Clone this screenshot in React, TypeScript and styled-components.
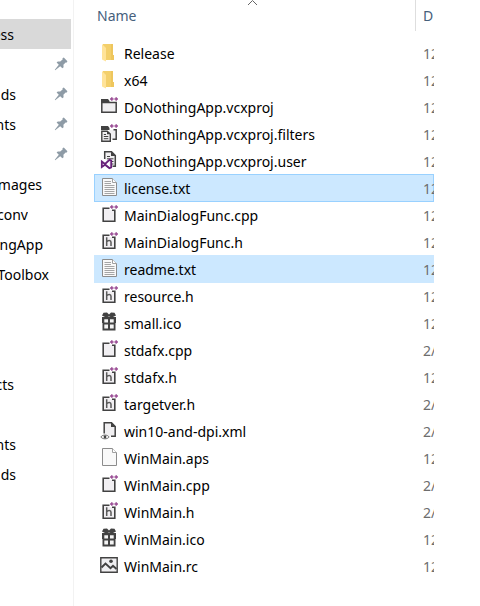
import React from "react";
import styled, { createGlobalStyle } from "styled-components";

const GlobalStyle = createGlobalStyle`
  * { box-sizing: border-box; }
  body {
    margin: 0;
    background: #fff;
    color: #000;
    font-family: "Segoe UI", "Noto Sans", sans-serif;
    font-size: 14px;
    line-height: 26px;
  }
`;

const Explorer = styled.div`
  display: flex;
  min-height: 100vh;
  overflow: hidden;
`;

const Sidebar = styled.nav`
  flex: none;
  width: 74px;
  padding: 19px 2px 0 0;
  border-right: 1px solid #f2f2f2;
`;

const NavGroup = styled.ul`
  list-style: none;
  margin: 0 0 20px;
  padding: 0;
`;

const NavItem = styled.li<{ $current?: boolean }>`
  height: 30px;
  background: ${(p) => (p.$current ? "#d9d9d9" : "transparent")};
`;

const NavLink = styled.a`
  display: flex;
  align-items: center;
  justify-content: space-between;
  height: 30px;
  padding-right: 3px;
  color: inherit;
  text-decoration: none;
`;

const NavLabel = styled.span<{ $extent: number }>`
  display: flex;
  justify-content: flex-end;
  width: ${(p) => p.$extent}px;
  padding-top: 2px;
  overflow: hidden;
  white-space: nowrap;
`;

const Files = styled.main`
  flex: 1;
  min-width: 0;
  padding: 0 46px 0 20px;
`;

const Table = styled.table`
  display: block;
  width: 100%;
`;

const Head = styled.thead`
  display: block;
  height: 39px;
`;

const HeadRow = styled.tr`
  display: flex;
  height: 31px;
  position: relative;
`;

const HeadCell = styled.th<{ $date?: boolean }>`
  flex: ${(p) => (p.$date ? "none" : "1")};
  width: ${(p) => (p.$date ? "19px" : "auto")};
  padding: ${(p) => (p.$date ? "3px 0 0 7px" : "3px 0 0 3px")};
  border-left: ${(p) => (p.$date ? "1px solid #dedede" : "none")};
  overflow: hidden;
  font-weight: 400;
  text-align: left;
`;

const SortButton = styled.button`
  border: 0;
  padding: 0;
  background: none;
  color: #46607c;
  font: inherit;
`;

const SortMark = styled.svg`
  position: absolute;
  left: 153px;
  top: 0;
`;

const Body = styled.tbody`
  display: block;
`;

const FileRow = styled.tr<{ $selected?: boolean; $focused?: boolean }>`
  display: flex;
  height: 28px;
  margin-bottom: -1px;
  background: ${(p) => (p.$selected ? "#cce8ff" : "transparent")};
  box-shadow: ${(p) => (p.$focused ? "inset 0 0 0 1px #99d1ff" : "none")};
`;

const NameCell = styled.td`
  display: flex;
  flex: 1;
  gap: 5px;
  min-width: 0;
  padding: 3px 0 0 5px;
  white-space: nowrap;
`;

const FileName = styled.span`
  line-height: 24px;
`;

const DateCell = styled.td`
  flex: none;
  width: 11px;
  padding: 3px 0 0;
  color: #6d6d6d;
  line-height: 24px;
  overflow: hidden;
  white-space: nowrap;
`;

const Glyph = styled.svg`
  flex: none;
  width: 20px;
  height: 20px;
`;

type Kind =
  | "folder" | "project" | "filters" | "user" | "text"
  | "cpp" | "header" | "gift" | "xml" | "blank" | "image";

const DARK = "#424242";
const PURPLE = "#9b4f96";

const PlusPlus = () => (
  <path
    d="M11 3H14.6M12.8 1.2V4.8M15.4 3H19M17.2 1.2V4.8"
    stroke={PURPLE}
    strokeWidth="1.5"
    fill="none"
  />
);

const SourceFrame = () => (
  <>
    <path d="M4.2 4.2H10.5V6H15.8V17.3H4.2Z" fill="#f1eff2" />
    <path d="M10.5 4.2H4.2V17.3H15.8V6.2H13" fill="none" stroke={DARK} strokeWidth="1.6" />
  </>
);

const Paper = () => (
  <>
    <path d="M3.5 1.5H13.5L17.5 5.5V18.5H3.5Z" fill="#f9f9f9" stroke="#8c8c8c" />
    <path d="M13.5 1.5V5.5H17.5" fill="#fff" stroke="#a0a0a0" />
  </>
);

const drawings: Record<Kind, React.ReactNode> = {
  folder: (
    <>
      <path d="M4 2H14V13H15V18H4Z" fill="#f3cf6b" />
      <path d="M12 2H14V13H15V18H12Z" fill="#eec65d" />
      <path d="M3 2L7 6V19.5L3 17.5Z" fill="#ffe399" />
    </>
  ),
  project: (
    <>
      <path d="M2 3H9L10.5 5V7.5H2Z" fill={DARK} />
      <path d="M2.8 6.5H17.2V16.2H2.8Z" fill="#f0eff1" stroke={DARK} strokeWidth="1.5" />
      <PlusPlus />
    </>
  ),
  filters: (
    <>
      <path d="M10 7H17V16H11Z" fill="#f0eff1" />
      <path d="M2 3H9L10.5 5V7H2Z" fill={DARK} />
      <path d="M14.5 6.7H17.2V16.2H13.5" fill="none" stroke={DARK} strokeWidth="1.5" />
      <path d="M2.8 8.2H8.2L11.3 11V18.3H2.8Z" fill="#f0eff1" stroke={DARK} strokeWidth="1.4" />
      <path d="M8 8.2V11.3H11.3Z" fill={DARK} />
      <path d="M4.8 11.5H7M4.8 13.5H9.3M4.8 15.7H9.3" stroke={DARK} />
      <PlusPlus />
    </>
  ),
  user: (
    <>
      <path d="M5.7 9V1.8H12.5L16.3 5.6V16.3H13.5" fill="#f0eff1" stroke={DARK} strokeWidth="1.5" />
      <path d="M12 1.5V6H16.5Z" fill={DARK} />
      <path d="M8 6.5H11M8 8.8H14.5M13 11.5H14.5M13 14H14.5" stroke={DARK} />
      <path
        d="M2.8 11.5L6 14L10.5 9.8L12.2 10.5V17.5L10.5 18.2L6 14.8L2.8 17Z"
        fill="#f3eaf5"
        stroke="#68217a"
        strokeWidth="1.8"
      />
      <path d="M10.3 12V16L7.8 14.2Z" fill="#fff" />
      <path d="M6 14.2L10.3 18" stroke="#68217a" strokeWidth="1.5" />
    </>
  ),
  text: (
    <>
      <Paper />
      <path d="M5.5 4.5H12M5.5 6.5H12M5.5 8.5H15.5M5.5 10.5H15.5M5.5 12.5H15.5M5.5 14.5H15.5M5.5 16.5H15.5" stroke="#a5a5a5" />
    </>
  ),
  cpp: (
    <>
      <SourceFrame />
      <PlusPlus />
    </>
  ),
  header: (
    <>
      <SourceFrame />
      <path d="M7.7 6.3V15M7.7 10.8C9 9 12 9 12 11.2V15" fill="none" stroke="#5a5a5a" strokeWidth="1.5" />
      <PlusPlus />
    </>
  ),
  gift: (
    <>
      <path d="M3 5H17V11H16.5V18.6H3.5V11H3Z" fill={DARK} />
      <path d="M5.3 7.3H9V10.5H5.3ZM11 7.3H14.7V10.5H11ZM5.3 12.5H9V16.6H5.3ZM11 12.5H14.7V16.6H11Z" fill="#f4f4f4" />
      <path d="M4.5 0.8L8 0.5L10 2.4L12 0.5L15.5 0.8L17 3.4L13 5.4L10 4.6L7 5.4L3 3.4Z" fill={DARK} />
    </>
  ),
  xml: (
    <>
      <path d="M5.2 13.5V2.8H12.5L16.2 6.5V16.2H12" fill="#f0eff1" stroke={DARK} strokeWidth="1.5" />
      <path d="M12 2V7H17Z" fill={DARK} />
      <path d="M1.8 17C3.5 14.4 8.5 14.4 10.2 17C8.5 19.4 3.5 19.4 1.8 17Z" fill="#fff" stroke="#666" />
      <circle cx="6" cy="16.9" r="1.4" fill={DARK} />
    </>
  ),
  blank: <Paper />,
  image: (
    <>
      <path d="M1.8 2.8H18.2V17.2H1.8Z" fill="#f0eff1" stroke={DARK} strokeWidth="1.4" />
      <path d="M2.5 12.5L6.5 8.5L11.5 13.2L14 10.8L17.5 14" fill="none" stroke={DARK} strokeWidth="1.9" />
      <circle cx="12" cy="6.2" r="1.8" fill={DARK} />
    </>
  ),
};

interface Place {
  label: string;
  extent: number;
  pinned?: boolean;
  current?: boolean;
}

const quickAccess: Place[] = [
  { label: "ess", extent: 14, current: true },
  { label: "", extent: 0, pinned: true },
  { label: "ds", extent: 16, pinned: true },
  { label: "nts", extent: 16, pinned: true },
  { label: "", extent: 0, pinned: true },
  { label: "mages", extent: 42 },
  { label: "conv", extent: 28 },
  { label: "ngApp", extent: 43 },
  { label: "Toolbox", extent: 49 },
];

const computer: Place[] = [
  { label: "", extent: 0 },
  { label: "", extent: 0 },
  { label: "cts", extent: 14 },
  { label: "", extent: 0 },
  { label: "nts", extent: 16 },
  { label: "ds", extent: 16 },
];

interface Entry {
  name: string;
  kind: Kind;
  date: string;
  selected?: boolean;
  focused?: boolean;
}

const entries: Entry[] = [
  { name: "Release", kind: "folder", date: "12" },
  { name: "x64", kind: "folder", date: "12" },
  { name: "DoNothingApp.vcxproj", kind: "project", date: "12" },
  { name: "DoNothingApp.vcxproj.filters", kind: "filters", date: "12" },
  { name: "DoNothingApp.vcxproj.user", kind: "user", date: "12" },
  { name: "license.txt", kind: "text", date: "12", selected: true, focused: true },
  { name: "MainDialogFunc.cpp", kind: "cpp", date: "12" },
  { name: "MainDialogFunc.h", kind: "header", date: "12" },
  { name: "readme.txt", kind: "text", date: "12", selected: true },
  { name: "resource.h", kind: "header", date: "12" },
  { name: "small.ico", kind: "gift", date: "12" },
  { name: "stdafx.cpp", kind: "cpp", date: "2/" },
  { name: "stdafx.h", kind: "header", date: "12" },
  { name: "targetver.h", kind: "header", date: "2/" },
  { name: "win10-and-dpi.xml", kind: "xml", date: "2/" },
  { name: "WinMain.aps", kind: "blank", date: "12" },
  { name: "WinMain.cpp", kind: "cpp", date: "2/" },
  { name: "WinMain.h", kind: "header", date: "2/" },
  { name: "WinMain.ico", kind: "gift", date: "12" },
  { name: "WinMain.rc", kind: "image", date: "12" },
];

const Pin = () => (
  <svg width="14" height="14" viewBox="0 0 14 14" aria-hidden="true">
    <path
      d="M8.5 1.2L9.8 0.6L13.4 4.2L12.8 5.5L11.6 5.4L9.4 7.8L9.6 10.2L8.4 11.3L6.2 9.2L1.2 13.2L0.8 12.8L4.8 7.8L2.6 5.6L3.8 4.4L6.2 4.6L8.6 2.4Z"
      fill="#8e9ba6"
    />
  </svg>
);

const Places = ({ items }: { items: Place[] }) => (
  <NavGroup>
    {items.map((item, i) => (
      <NavItem key={i} $current={item.current}>
        {(item.label || item.pinned) && (
          <NavLink href="#">
            <NavLabel $extent={item.extent}>{item.label}</NavLabel>
            {item.pinned && <Pin />}
          </NavLink>
        )}
      </NavItem>
    ))}
  </NavGroup>
);

export default function App() {
  return (
    <>
      <GlobalStyle />
      <Explorer>
        <Sidebar>
          <Places items={quickAccess} />
          <Places items={computer} />
        </Sidebar>
        <Files>
          <Table>
            <Head>
              <HeadRow>
                <HeadCell>
                  <SortButton>Name</SortButton>
                  <SortMark width="11" height="6" viewBox="0 0 11 6" aria-hidden="true">
                    <path d="M1 5L5.5 0.5L10 5" fill="none" stroke="#666" />
                  </SortMark>
                </HeadCell>
                <HeadCell $date>
                  <SortButton>D</SortButton>
                </HeadCell>
              </HeadRow>
            </Head>
            <Body>
              {entries.map((e) => (
                <FileRow key={e.name} $selected={e.selected} $focused={e.focused}>
                  <NameCell>
                    <Glyph viewBox="0 0 20 20" aria-hidden="true">
                      {drawings[e.kind]}
                    </Glyph>
                    <FileName>{e.name}</FileName>
                  </NameCell>
                  <DateCell>{e.date}</DateCell>
                </FileRow>
              ))}
            </Body>
          </Table>
        </Files>
      </Explorer>
    </>
  );
}
